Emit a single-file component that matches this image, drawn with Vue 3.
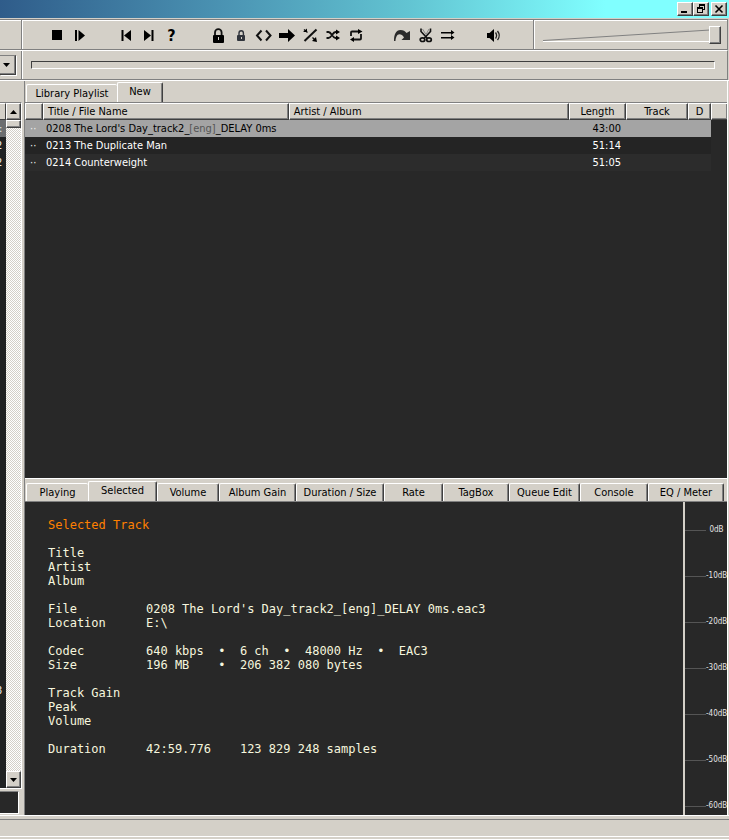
<script setup>
import { ref } from 'vue'

const volume = ref(100)
const position = ref(0)
const activePlaylist = ref('New')
const activeTab = ref('Selected')
const selectedTrack = ref(0)

const playlists = ['Library Playlist', 'New']
const tabs = ['Playing', 'Selected', 'Volume', 'Album Gain', 'Duration / Size', 'Rate', 'TagBox', 'Queue Edit', 'Console', 'EQ / Meter']

const tracks = [
  { pre: "0208 The Lord's Day_track2_", tag: '[eng]', post: '_DELAY 0ms', length: '43:00' },
  { pre: '0213 The Duplicate Man', tag: '', post: '', length: '51:14' },
  { pre: '0214 Counterweight', tag: '', post: '', length: '51:05' },
]

const info = [
  [['Title', ''], ['Artist', ''], ['Album', '']],
  [['File', "0208 The Lord's Day_track2_[eng]_DELAY 0ms.eac3"], ['Location', 'E:\\']],
  [['Codec', '640 kbps  •  6 ch  •  48000 Hz  •  EAC3'], ['Size', '196 MB    •  206 382 080 bytes']],
  [['Track Gain', ''], ['Peak', ''], ['Volume', '']],
  [['Duration', '42:59.776    123 829 248 samples']],
]

const levels = ['0dB', '-10dB', '-20dB', '-30dB', '-40dB', '-50dB', '-60dB']
</script>

<template>
  <div class="window">
    <header class="titlebar">
      <button class="sys" aria-label="Minimize">
        <svg width="12" height="10" viewBox="0 0 12 10"><rect x="2" y="7" width="6" height="2" /></svg>
      </button>
      <button class="sys" aria-label="Restore">
        <svg width="12" height="10" viewBox="0 0 12 10"><path d="M4 0h6v6H8V5h1V2H5v1H4zM2 3h6v6H2zM3 5v3h4V5z" fill-rule="evenodd" /></svg>
      </button>
      <button class="sys close" aria-label="Close">
        <svg width="12" height="10" viewBox="0 0 12 10"><path d="M2.5 1.5l7 7M9.5 1.5l-7 7" stroke="#000" stroke-width="1.6" /></svg>
      </button>
    </header>

    <div class="bar">
      <div class="bar-left"></div>
      <nav class="tools" aria-label="Playback">
        <button aria-label="Stop"><svg viewBox="0 0 23 17"><rect x="7" y="3" width="10" height="10" /></svg></button>
        <button aria-label="Play"><svg viewBox="0 0 23 17"><path d="M7 3h2v11H7zM10.500 3L17 8.500 10.500 14z" /></svg></button>
        <i></i>
        <button aria-label="Previous"><svg viewBox="0 0 23 17"><path d="M7.500 3h2v11h-2zM17 3v11L10 8.500z" /></svg></button>
        <button aria-label="Next"><svg viewBox="0 0 23 17"><path d="M14.500 3h2v11h-2zM7 3v11l7-5.500z" /></svg></button>
        <button aria-label="Help" class="help">?</button>
        <i></i>
        <button aria-label="Lock">
          <svg viewBox="0 0 23 17"><path d="M9 9V5.500a3.300 3.300 0 0 1 6.600 0V9" fill="none" stroke="#111" stroke-width="1.800" /><rect x="7" y="8" width="11" height="8" rx="1" /><path d="M12 10h1v3h-1z" fill="#d4d0c8" /></svg>
        </button>
        <button aria-label="Soft lock">
          <svg viewBox="0 0 23 17"><path d="M10 9V6a2.200 2.200 0 0 1 4.400 0v3" fill="none" stroke="#30343c" stroke-width="1.400" /><rect x="8" y="8" width="8" height="6" rx="1" fill="#30343c" /><path d="M12 10h1v2h-1z" fill="#d4d0c8" /></svg>
        </button>
        <button aria-label="Between">
          <svg viewBox="0 0 23 17"><path d="M9.500 3.500l-4.500 5 4.500 5M14 3.500l4.500 5-4.500 5" fill="none" stroke="#111" stroke-width="2" /></svg>
        </button>
        <button aria-label="Forward"><svg viewBox="0 0 23 17"><path d="M4 6h9V2l7 6.500L13 15v-4H4z" /></svg></button>
        <button aria-label="Random">
          <svg viewBox="0 0 23 17"><path d="M6.500 14L18.500 2.500" stroke="#111" stroke-width="2" /><path d="M6 2.500l3.500 3M14.500 10.500l3 3" stroke="#111" stroke-width="1.400" /><path d="M5 5h4V1.500zM14 14l5 1-1-5z" /></svg>
        </button>
        <button aria-label="Shuffle">
          <svg viewBox="0 0 23 17"><path d="M5.500 5h2c3 0 4 6 7 6h1.500M5.500 11h2c3 0 4-6 7-6h1.500" fill="none" stroke="#111" stroke-width="1.800" /><path d="M15 2.500l4 2.500-4 2.500zM15 8.500l4 2.500-4 2.500z" /></svg>
        </button>
        <button aria-label="Repeat">
          <svg viewBox="0 0 23 17"><path d="M7 9V5.500Q7 4.500 8 4.500h7M17 7v4.500q0 1-1 1H9" fill="none" stroke="#111" stroke-width="1.800" /><path d="M14 2l4.500 2.500L14 7zM10 10L6 12.500 10 15z" /></svg>
        </button>
        <i></i>
        <button aria-label="Skip">
          <svg viewBox="0 0 23 17"><path d="M4 14C4 7 6 3 10.500 3c3 0 4.500 1 6 3L20 4v9h-8.500l2.500-2.500C12 7 8 6 6.500 9.500 5.500 11.500 5.500 13 5.500 14z" fill="#2a2a2a" /></svg>
        </button>
        <button aria-label="Cut">
          <svg viewBox="0 0 23 17"><path d="M8 1.500v3l6.500 7M17.500 1.500v3l-6.500 7" fill="none" stroke="#111" stroke-width="1.600" /><path d="M9.500 2l3.500 5.500L16 2" fill="none" stroke="#888" stroke-width="1" /><ellipse cx="9.500" cy="12.700" rx="2.300" ry="1.800" fill="none" stroke="#111" stroke-width="1.700" /><ellipse cx="16" cy="12.700" rx="2.300" ry="1.800" fill="none" stroke="#111" stroke-width="1.700" /></svg>
        </button>
        <button aria-label="Continue">
          <svg viewBox="0 0 23 17"><path d="M5 5h10V3l3.500 2.500L15 8V6.500H5zM5 10h10V8l3.500 2.500L15 13v-1.500H5z" /></svg>
        </button>
        <i></i>
        <button aria-label="Mute">
          <svg viewBox="0 0 23 17"><path d="M5 6h2.500L12 2v13l-4.500-4H5z" /><path d="M13.500 5.500q2.200 3 0 6M15.500 4q3.500 4.500 0 9" fill="none" stroke="#222" stroke-width="1.300" /></svg>
        </button>
      </nav>
      <div class="volume">
        <svg viewBox="0 0 100 14" preserveAspectRatio="none"><path d="M0 12.500L100 2" stroke="#808080" vector-effect="non-scaling-stroke" /><path d="M0 13.500H100" stroke="#fff" vector-effect="non-scaling-stroke" /></svg>
        <input v-model="volume" type="range" min="0" max="100" aria-label="Volume" />
      </div>
    </div>

    <div class="bar seekbar">
      <div class="bar-left combo">
        <select aria-label="Search"><option></option></select>
        <svg width="7" height="4" viewBox="0 0 7 4"><path d="M0 0h7L3.500 4z" /></svg>
      </div>
      <div class="seek">
        <input v-model="position" type="range" min="0" max="100" aria-label="Position" />
      </div>
    </div>

    <main class="body">
      <aside class="library">
        <div class="lib-main">
          <div class="lib-list">
            <div class="lib-head"></div>
            <div class="lib-row on">:</div>
            <div class="lib-row">2</div>
            <div class="lib-row">2</div>
            <div class="lib-row last">3</div>
          </div>
          <div class="scroll">
            <button class="raised" aria-label="Scroll up"><svg width="7" height="4" viewBox="0 0 7 4"><path d="M0 4h7L3.500 0z" /></svg></button>
            <div class="raised thumb"></div>
            <div class="track"></div>
            <button class="raised" aria-label="Scroll down"><svg width="7" height="4" viewBox="0 0 7 4"><path d="M0 0h7L3.500 4z" /></svg></button>
          </div>
        </div>
        <div class="lib-foot"></div>
      </aside>

      <section class="content">
        <div class="tabs lists" role="tablist">
          <button v-for="p in playlists" :key="p" role="tab" class="tab" :class="{ on: p === activePlaylist }" @click="activePlaylist = p">{{ p }}</button>
        </div>

        <div class="playlist">
          <table>
            <colgroup>
              <col class="c-mark" /><col class="c-title" /><col /><col class="c-len" /><col class="c-track" /><col class="c-d" /><col class="c-end" />
            </colgroup>
            <thead>
              <tr><th></th><th class="left">Title / File Name</th><th class="left">Artist / Album</th><th>Length</th><th>Track</th><th>D</th><th class="end"></th></tr>
            </thead>
            <tbody>
              <tr v-for="(t, i) in tracks" :key="i" :class="{ on: i === selectedTrack }" @click="selectedTrack = i">
                <td class="mark">··</td>
                <td class="name">{{ t.pre }}<span>{{ t.tag }}</span>{{ t.post }}</td>
                <td></td>
                <td class="len">{{ t.length }}</td>
                <td></td>
                <td></td>
                <td class="end"></td>
              </tr>
            </tbody>
          </table>
        </div>

        <div class="tabs panels" role="tablist">
          <button v-for="t in tabs" :key="t" role="tab" class="tab" :class="{ on: t === activeTab }" @click="activeTab = t">{{ t }}</button>
        </div>

        <div class="details">
          <div class="info">
            <h2>Selected Track</h2>
            <dl v-for="(group, g) in info" :key="g">
              <template v-for="row in group" :key="row[0]">
                <dt>{{ row[0] }}</dt>
                <dd>{{ row[1] }}</dd>
              </template>
            </dl>
          </div>
          <div class="meter">
            <div v-for="l in levels" :key="l" class="level"><i></i><span>{{ l }}</span></div>
          </div>
        </div>
      </section>
      <div class="edge"></div>
    </main>

    <footer class="status"><div></div></footer>
  </div>
</template>

<style>
body {
  margin: 0;
  background: #d4d0c8;
}
</style>

<style scoped>
* {
  box-sizing: border-box;
}
.window {
  display: flex;
  flex-direction: column;
  height: 100vh;
  min-height: 600px;
  overflow: hidden;
  background: #d4d0c8;
  color: #000;
  font: 11px/14px "DejaVu Sans Condensed", "DejaVu Sans", sans-serif;
}
button {
  font: inherit;
  color: inherit;
  padding: 0;
  margin: 0;
  border: 0;
  border-radius: 0;
  background: none;
}
svg {
  display: block;
}

/* title bar */
.titlebar {
  flex: none;
  height: 18px;
  display: flex;
  justify-content: flex-end;
  padding: 2px 2px 2px 0;
  background: linear-gradient(90deg, #2f5c8a, #4a92b2 30%, #62c4d2 56%, #80ffff 83%);
}
.sys {
  width: 16px;
  height: 14px;
  display: grid;
  place-items: center;
  background: #d4d0c8;
  border: 1px solid;
  border-color: #fff #404040 #404040 #fff;
  box-shadow: inset -1px -1px #808080;
}
.close {
  margin-left: 2px;
}

/* toolbars */
.bar {
  flex: none;
  height: 31px;
  display: flex;
  margin: 1px 1px 0 0;
  border: solid #808080;
  border-width: 1px 1px 1px 0;
  box-shadow: inset 0 1px #fff;
}
.bar-left {
  flex: none;
  width: 22px;
  border-right: 1px solid #808080;
}
.tools {
  flex: 1;
  display: flex;
  align-items: center;
  padding: 2px 0 0 22px;
  border-left: 1px solid #fff;
  border-right: 1px solid #808080;
}
.tools button,
.tools i {
  flex: none;
  width: 23px;
  height: 17px;
}
.tools svg {
  width: 23px;
  height: 17px;
  fill: #000;
}
.tools .help {
  font: bold 16px/17px "DejaVu Sans Condensed", "DejaVu Sans", sans-serif;
}
.volume {
  flex: none;
  width: 193px;
  display: grid;
  padding: 5px 6px 0 8px;
  border-left: 1px solid #fff;
}
.volume svg,
.volume input {
  grid-area: 1 / 1;
}
.volume svg {
  width: calc(100% - 11px);
  height: 14px;
  margin-top: 3px;
}
.volume input {
  appearance: none;
  width: 100%;
  height: 19px;
  margin: 0;
  background: none;
}
.volume input::-webkit-slider-thumb {
  appearance: none;
  width: 12px;
  height: 18px;
  background: #d4d0c8;
  border: 1px solid;
  border-color: #fff #404040 #404040 #fff;
  box-shadow: inset -1px -1px #808080;
}
.seekbar {
  margin-top: 0;
  height: 30px;
  border-top: 1px solid #fff;
  box-shadow: none;
}
.seek {
  flex: 1;
  display: flex;
  align-items: center;
  padding: 0 12px 0 8px;
  border-left: 1px solid #fff;
}
.seek input {
  appearance: none;
  width: 100%;
  height: 8px;
  margin: 0;
  background: #d4d0c8;
  border: 1px solid;
  border-color: #404040 #fff #fff #404040;
}
.seek input::-webkit-slider-thumb {
  appearance: none;
  width: 1px;
  height: 1px;
}
.combo {
  display: grid;
  align-items: center;
  padding-right: 5px;
}
.combo select,
.combo svg {
  grid-area: 1 / 1;
}
.combo select {
  appearance: none;
  width: 100%;
  height: 20px;
  margin: 0;
  padding: 0;
  background: #d4d0c8;
  border: 1px solid;
  border-color: #808080 #404040 #404040 #808080;
  border-left: 0;
  border-radius: 0;
  box-shadow: inset -1px -1px #808080, 1px 1px #fff;
}
.combo svg {
  margin-left: 3px;
  pointer-events: none;
}

/* body */
.body {
  flex: 1;
  min-height: 0;
  display: flex;
  border-top: 1px solid #fff;
}
.edge {
  flex: none;
  width: 2px;
  border-left: 1px solid #fff;
}
.library {
  flex: none;
  width: 25px;
  padding-top: 21px;
  display: flex;
  flex-direction: column;
  border-right: 1px solid #808080;
}
.lib-main {
  flex: 1;
  width: 22px;
  display: flex;
  border-top: 1px solid #808080;
  border-right: 1px solid #fff;
  border-bottom: 1px solid #fff;
}
.lib-list {
  width: 6px;
  display: flex;
  flex-direction: column;
  overflow: hidden;
  background: #202223;
  color: #eee;
}
.lib-head {
  height: 17px;
  background: #d4d0c8;
  border-top: 1px solid #fff;
  border-right: 1px solid #404040;
  border-bottom: 1px solid #404040;
}
.lib-row {
  height: 17px;
  line-height: 17px;
  text-indent: -4px;
}
.lib-row.on {
  background: #6c6e70;
  text-indent: -1px;
}
.lib-row.last {
  margin: auto 0 89px;
}
.scroll {
  flex: 1;
  display: flex;
  flex-direction: column;
}
.raised {
  flex: none;
  height: 17px;
  display: grid;
  place-items: center;
  background: #d4d0c8;
  border: 1px solid;
  border-color: #fff #404040 #404040 #fff;
  box-shadow: inset -1px -1px #808080;
}
.thumb {
  height: 8px;
}
.track {
  flex: 1;
  background: repeating-conic-gradient(#fff 0 25%, #d4d0c8 0 50%) 0 0 / 2px 2px;
}
.lib-foot {
  width: 19px;
  height: 23px;
  margin: 2px 0 1px;
  background: #282828;
  border: solid #fff;
  border-width: 1px 1px 1px 0;
  border-top-color: #808080;
}
.content {
  flex: 1;
  min-width: 0;
  display: flex;
  flex-direction: column;
}

/* tabs */
.tabs {
  flex: none;
  display: grid;
  align-items: end;
  padding-left: 1px;
}
.lists {
  height: 21px;
  grid-template-columns: 91px 46px;
}
.panels {
  height: 23px;
  grid-template-columns: 62px 69px 62px 77px 88px 59px 66px 71px 68px 76px;
  border-top: 1px solid #fff;
}
.tab {
  height: 18px;
  white-space: nowrap;
  border: solid;
  border-width: 1px 1px 0;
  border-color: #fff #404040 #fff #fff;
  border-radius: 2px 2px 0 0;
  box-shadow: inset -1px 0 #808080;
}
.tabs .tab:first-child {
  border-right: 0;
  box-shadow: none;
}
.tab.on {
  height: 20px;
  padding-bottom: 2px;
}

/* playlist */
.playlist {
  flex: 1;
  min-height: 100px;
  overflow: hidden;
  background: #282828;
  border-top: 1px solid #808080;
}
table {
  width: 100%;
  table-layout: fixed;
  border-collapse: separate;
  border-spacing: 0;
}
.c-mark {
  width: 18px;
}
.c-title {
  width: 35%;
}
.c-len {
  width: 57px;
}
.c-track {
  width: 62px;
}
.c-d {
  width: 23px;
}
.c-end {
  width: 16px;
}
th {
  height: 17px;
  padding: 0;
  font-weight: normal;
  line-height: 14px;
  background: #d4d0c8;
  border: 1px solid;
  border-color: #fff #404040 #404040 #fff;
  box-shadow: inset -1px -1px #808080;
}
th.left {
  text-align: left;
  padding-left: 4px;
}
th.end {
  border-right: 0;
}
td {
  height: 17px;
  padding: 0;
  line-height: 17px;
  color: #fff;
  white-space: nowrap;
}
tr:nth-child(2) td {
  background: #242424;
}
tr:nth-child(3) td {
  background: #2c2c2c;
}
tr.on td {
  color: #000;
  background: #a4a4a4;
}
tbody tr td.end {
  background: #282828;
}
td.name {
  padding-left: 3px;
}
td.name span {
  color: #555;
}
td.mark,
tr.on td.mark {
  padding-left: 5px;
  color: #eee;
}
td.len {
  text-align: right;
  padding-right: 5px;
}

/* details */
.details {
  flex: none;
  display: flex;
  min-height: 314px;
  background: #282828;
  border-top: 1px solid #808080;
}
.info {
  flex: 1;
  min-width: 0;
  padding: 16px 0 0 23px;
  font: 12px/14px "DejaVu Sans Mono", "Liberation Mono", monospace;
  color: #f6f6de;
  overflow: hidden;
}
h2 {
  margin: 0;
  font: inherit;
  color: #ff8000;
}
dl {
  display: grid;
  grid-template-columns: 98px 1fr;
  grid-auto-rows: 14px;
  margin: 14px 0 0;
}
dd {
  margin: 0;
  white-space: pre;
}
.meter {
  flex: none;
  width: 44px;
  display: flex;
  flex-direction: column;
  justify-content: space-between;
  padding: 23px 0 4px;
  border-left: 2px solid #d4d0c8;
  font: 8px/10px "DejaVu Sans Condensed", "DejaVu Sans", sans-serif;
  color: #e4e4e4;
}
.level {
  display: flex;
  align-items: center;
  height: 10px;
}
.level i {
  flex: none;
  width: 21px;
  height: 1px;
  background: #555;
}
.level span {
  flex: 1;
  text-align: center;
}

/* status bar */
.status {
  flex: none;
  height: 25px;
  padding-top: 3px;
  border-top: 1px solid #fff;
}
.status div {
  height: 18px;
  border-top: 1px solid #808080;
  border-bottom: 1px solid #fff;
  box-shadow: 0 2px #d4d0c8, 0 3px #fff;
}
</style>
